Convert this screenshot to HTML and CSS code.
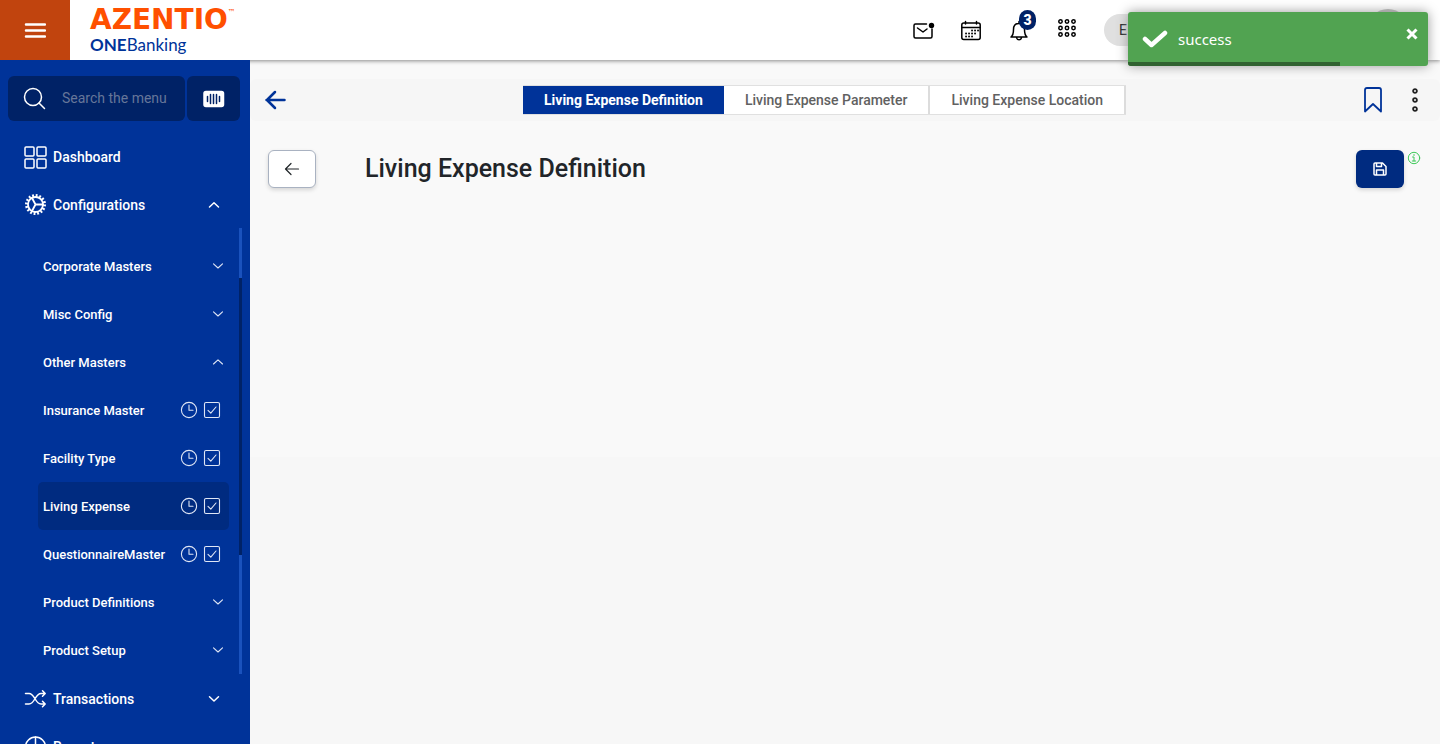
FILE: index.html
```html
<!DOCTYPE html>
<html lang="en">
<head>
<meta charset="utf-8">
<title>Living Expense Definition</title>
<link rel="stylesheet" href="styles.css">
</head>
<body>
<svg class="sprite" aria-hidden="true">
  <symbol id="down" viewBox="0 0 12 8"><path d="M1.500 1.800 6 6l4.500-4.200"/></symbol>
  <symbol id="up" viewBox="0 0 12 8"><path d="M1.500 6 6 1.800 10.500 6"/></symbol>
  <symbol id="clock" viewBox="0 0 18 18"><circle cx="9" cy="9" r="7.6"/><path d="M9 4v5.2h4"/></symbol>
  <symbol id="check" viewBox="0 0 18 18"><rect x="1.5" y="1.5" width="15" height="15" rx="1.5"/><path d="m5 9.3 2.8 2.8L13 6"/></symbol>
</svg>
<header class="topbar">
  <button class="burger" aria-label="Toggle menu"><svg width="22" height="16" viewBox="0 0 22 16"><path d="M2 2.500h19M2 8.500h19M2 14.500h19"/></svg></button>
  <div class="brand">
    <div class="brand-name">AZENTIO<span class="tm">™</span></div>
    <div class="brand-product"><b>ONE</b>Banking</div>
  </div>
  <div class="top-actions">
    <button class="icon-btn" aria-label="Messages"><svg width="24" height="24" viewBox="0 0 24 24"><path d="M15.500 6H4.500Q3 6 3 7.500v11Q3 20 4.500 20h15q1.500 0 1.500-1.500V11M6.500 10l5.500 4 4-3"/><circle class="solid" cx="20.500" cy="7.500" r="2.700"/></svg></button>
    <button class="icon-btn" aria-label="Calendar"><svg width="24" height="24" viewBox="0 0 24 24"><rect x="2.800" y="5" width="18.400" height="16.500" rx="2"/><path d="M3 9.500h18M6.500 3.500V6M17.500 3.500V6"/><path class="dots" d="M13 12.500h.1M16 12.500h.1M19 12.500h.1M7 15.500h.1M10 15.500h.1M13 15.500h.1M16 15.500h.1M7 18.500h.1M10 18.500h.1M13 18.500h.1"/></svg></button>
    <button class="icon-btn" aria-label="Notifications, 3 new"><svg width="24" height="24" viewBox="0 0 24 24"><path d="M4 19h16c-2-1.500-2.500-3.500-2.500-7.500 0-3.500-2-6-5.500-6s-5.500 2.500-5.500 6c0 4-.5 6-2.500 7.500ZM9.500 19.500c.5 3 4.500 3 5 0M12 5.500V3.500"/></svg><span class="badge">3</span></button>
    <button class="icon-btn apps" aria-label="Applications"><svg width="20" height="20" viewBox="0 0 20 20"><g class="rings"><circle cx="3.500" cy="3.500" r="1.700"/><circle cx="10" cy="3.500" r="1.700"/><circle cx="16.500" cy="3.500" r="1.700"/><circle cx="3.500" cy="10" r="1.700"/><circle cx="10" cy="10" r="1.700"/><circle cx="16.500" cy="10" r="1.700"/><circle cx="3.500" cy="16.500" r="1.700"/><circle cx="10" cy="16.500" r="1.700"/><circle cx="16.500" cy="16.500" r="1.700"/></g></svg></button>
    <button class="entity">E</button>
    <div class="avatar"></div>
  </div>
</header>
<div class="shell">
  <aside class="sidebar">
    <div class="search-row">
      <label class="search"><svg width="24" height="24" viewBox="0 0 24 24"><circle cx="10" cy="10" r="8.500"/><path d="m16 16 5.500 5.500"/></svg><input type="text" placeholder="Search the menu" aria-label="Search the menu"></label>
      <button class="scan" aria-label="Scan"><svg width="22" height="18" viewBox="0 0 22 18"><rect class="plate" x="1" y="1.500" width="19.500" height="15" rx="2"/><path d="M4.500 6.500v5M7.500 4.500v9M10.500 4.500v9M13.500 4.500v9M16.500 6.500v5"/></svg></button>
    </div>
    <nav class="menu">
      <a class="item" href="#"><svg width="24" height="24" viewBox="0 0 24 24"><rect x="2" y="2" width="9" height="9" rx="1"/><rect x="14" y="2" width="9" height="9" rx="1"/><rect x="2" y="14" width="9" height="9" rx="1"/><rect x="14" y="14" width="9" height="9" rx="1"/></svg><span>Dashboard</span></a>
      <a class="item" href="#"><svg width="24" height="24" viewBox="0 0 24 24"><circle class="teeth" cx="12.500" cy="11.500" r="9"/><circle class="gear" cx="12.500" cy="11.500" r="7.500"/><path class="gear" d="M12.500 11.500H20M12.500 11.500 9 5M12.500 11.500 9 18"/></svg><span>Configurations</span><svg class="chev" width="12" height="8"><use href="#up"/></svg></a>
      <div class="submenu">
        <div class="sublist">
          <a class="sub" href="#"><span>Corporate Masters</span><svg class="chev" width="12" height="8"><use href="#down"/></svg></a>
          <a class="sub" href="#"><span>Misc Config</span><svg class="chev" width="12" height="8"><use href="#down"/></svg></a>
          <a class="sub" href="#"><span>Other Masters</span><svg class="chev" width="12" height="8"><use href="#up"/></svg></a>
          <a class="sub leaf" href="#"><span>Insurance Master</span><svg width="18" height="18"><use href="#clock"/></svg><svg width="18" height="18"><use href="#check"/></svg></a>
          <a class="sub leaf" href="#"><span>Facility Type</span><svg width="18" height="18"><use href="#clock"/></svg><svg width="18" height="18"><use href="#check"/></svg></a>
          <a class="sub leaf current" href="#"><span>Living Expense</span><svg width="18" height="18"><use href="#clock"/></svg><svg width="18" height="18"><use href="#check"/></svg></a>
          <a class="sub leaf" href="#"><span>QuestionnaireMaster</span><svg width="18" height="18"><use href="#clock"/></svg><svg width="18" height="18"><use href="#check"/></svg></a>
          <a class="sub" href="#"><span>Product Definitions</span><svg class="chev" width="12" height="8"><use href="#down"/></svg></a>
          <a class="sub" href="#"><span>Product Setup</span><svg class="chev" width="12" height="8"><use href="#down"/></svg></a>
        </div>
        <div class="track"><div class="thumb"></div></div>
      </div>
      <a class="item" href="#"><svg width="24" height="24" viewBox="0 0 24 24"><path d="M2.500 6.500h3.500c6 0 6 10.500 12 10.500h4M2.500 17h3.500c6 0 6-10.500 12-10.500h4M19.500 3.800l2.700 2.700-2.700 2.700M19.500 14.300l2.700 2.700-2.700 2.700"/></svg><span>Transactions</span><svg class="chev" width="12" height="8"><use href="#down"/></svg></a>
      <a class="item" href="#"><svg width="24" height="24" viewBox="0 0 24 24"><circle cx="12.500" cy="12" r="10"/><path d="M12.500 2v10h10M12.500 12l-7 7"/></svg><span>Reports</span></a>
    </nav>
  </aside>
  <main class="content">
    <div class="toolbar">
      <button class="nav-back" aria-label="Back"><svg width="22" height="20" viewBox="0 0 22 20"><path d="M20.500 10H2.500M11 2 3 10l8 8"/></svg></button>
      <div class="tabs" role="tablist">
        <button class="tab active" role="tab" aria-selected="true">Living Expense Definition</button>
        <button class="tab" role="tab" aria-selected="false">Living Expense Parameter</button>
        <button class="tab" role="tab" aria-selected="false">Living Expense Location</button>
      </div>
      <div class="tools">
        <button aria-label="Bookmark"><svg class="mark" width="20" height="28" viewBox="0 0 20 28"><path d="M2 25.500V4q0-2 2-2h12q2 0 2 2v21.500l-8-7.500Z"/></svg></button>
        <button aria-label="More"><svg class="more" width="8" height="26" viewBox="0 0 8 26"><circle cx="4" cy="4" r="1.900"/><circle cx="4" cy="13" r="1.900"/><circle cx="4" cy="22" r="1.900"/></svg></button>
      </div>
    </div>
    <div class="page-head">
      <button class="return" aria-label="Return"><svg width="16" height="14" viewBox="0 0 16 14"><path d="M14.500 7H1.500M7 1.500 1.500 7 7 12.500"/></svg></button>
      <h1>Living Expense Definition</h1>
      <button class="save" aria-label="Save"><svg width="14" height="14" viewBox="0 0 14 14"><path d="M2 1h7.500L13 4.500V12q0 1-1 1H2q-1 0-1-1V2q0-1 1-1ZM3.500 1.500v3h5v-3M3.500 13V8h7v5"/></svg></button>
      <svg class="info" width="14" height="14" viewBox="0 0 14 14"><circle cx="7" cy="7" r="5.700"/><path d="M5.500 6H7v4M5.300 10h3.400M7 3.500v1"/></svg>
    </div>
  </main>
</div>
<div class="toast" role="status">
  <svg width="26" height="20" viewBox="0 0 26 20"><path class="tick" d="m3 10 6.500 6L23 4"/></svg>
  <span>success</span>
  <button aria-label="Close"><svg width="12" height="12" viewBox="0 0 12 12"><path d="m1.500 1.500 9 9M10.500 1.500l-9 9"/></svg></button>
  <div class="progress"></div>
</div>
</body>
</html>
```
FILE: styles.css
```css
* { box-sizing: border-box; }
body { margin: 0; height: 100vh; display: flex; flex-direction: column; overflow: hidden; font-family: Roboto, "Liberation Sans", sans-serif; color: #212529; }
button { padding: 0; border: 0; background: none; font: inherit; color: inherit; cursor: pointer; }
svg { display: block; flex: none; fill: none; stroke: currentColor; stroke-width: 1.5; stroke-linecap: round; stroke-linejoin: round; }
a { color: inherit; text-decoration: none; }
.sprite { position: absolute; width: 0; height: 0; }

.topbar { position: relative; z-index: 1; flex: none; display: flex; height: 60px; background: #fff; box-shadow: 0 1px 4px rgba(0, 0, 0, .45); }
.burger { width: 70px; display: flex; align-items: center; justify-content: center; background: #c1440e; color: #fff; }
.burger svg { stroke-width: 2.5; }
.brand { padding: 7px 0 0 20px; }
.brand-name { display: flex; align-items: flex-start; height: 28px; font: 700 28px/26px "DejaVu Sans", sans-serif; color: #ff5000; }
.tm { font-size: 8px; line-height: 12px; font-weight: 400; }
.brand-product { font: 400 17px/20px Lato, sans-serif; color: #003399; }
.top-actions { margin-left: auto; display: flex; align-items: center; gap: 24px; padding-right: 31px; }
.icon-btn { position: relative; width: 24px; height: 24px; color: #000; }
.apps { display: flex; justify-content: center; align-items: flex-start; }
.solid { fill: #000; stroke: none; }
.dots { stroke-width: 1.8; }
.rings { stroke-width: 1.5; }
.badge { position: absolute; top: -8px; right: -5px; width: 17px; height: 20px; border-radius: 10px; background: #002266; color: #fff; font-size: 14px; line-height: 20px; font-weight: 900; text-align: center; }
.entity { width: 240px; height: 32px; margin-left: 1px; padding-left: 15px; border-radius: 16px; background: #e0e0e0; font-size: 14px; text-align: left; }
.avatar { width: 42px; height: 42px; margin-left: -1px; border-radius: 50%; background: #b5b5b5; }

.shell { flex: 1; min-height: 0; display: flex; }
.sidebar { flex: none; width: 250px; background: #003399; color: #fff; overflow: hidden; position: relative; z-index: 2; }
.search-row { display: flex; gap: 2px; padding: 16px 10px 12px 8px; }
.search { flex: 1; display: flex; align-items: center; gap: 13px; height: 45px; padding-left: 15px; border-radius: 6px; background: #002266; }
.search input { min-width: 0; width: 100%; padding: 0 2px 2px; border: 0; outline: 0; background: none; color: #fff; font: 400 14px Roboto, sans-serif; }
.search input::placeholder { color: #667699; }
.scan { width: 53px; display: flex; align-items: center; justify-content: center; border-radius: 6px; background: #002266; color: #002266; }
.plate { fill: #fff; stroke: #fff; }
.item { display: flex; align-items: center; gap: 6px; height: 48px; padding: 0 30px 0 23px; font-size: 14px; font-weight: 500; }
.item .chev, .sub .chev { margin-left: auto; }
.teeth { stroke-width: 3; stroke-dasharray: 1.8 1.73; stroke-linecap: butt; }
.gear { stroke-width: 1.8; }
.submenu { display: flex; justify-content: space-between; margin-top: -1px; padding: 0 8px 1px 38px; }
.sublist { width: 191px; padding-top: 14px; }
.sub { display: flex; align-items: center; gap: 5px; height: 48px; padding: 0 5px; border-radius: 5px; font-size: 13px; font-weight: 500; }
.leaf { padding-right: 8px; }
.leaf span { margin-right: auto; }
.sub svg { stroke-width: 1.1; color: #dfe6f5; }
.current { background: #002b80; }
.track { width: 3px; padding-top: 50px; background: #1a52bd; }
.thumb { height: 70%; background: #002266; }

.content { flex: 1; min-width: 0; padding-top: 19px; background: linear-gradient(#f9f9f9 58%, #f7f7f7 58%); }
.toolbar { display: flex; align-items: center; justify-content: space-between; height: 42px; padding: 0 21px 0 14px; border-radius: 6px; background: #f6f6f6; }
.nav-back { color: #003399; }
.nav-back svg { stroke-width: 2.5; }
.tabs { display: flex; height: 30px; border: 1px solid #e0e0e0; border-width: 1px 0; background: #fff; }
.tab { padding: 0 21px; border-right: 2px solid #dcdcdc; color: #616161; font-size: 14px; font-weight: 500; }
.active { background: #003399; border: 0; color: #fff; font-weight: 700; }
.tools { display: flex; align-items: center; gap: 28px; }
.mark { color: #003399; stroke-width: 1.8; }
.more { color: #212121; stroke-width: 1.8; }
.page-head { display: flex; align-items: flex-start; padding: 29px 19px 0 18px; }
.return, .save { display: flex; align-items: center; justify-content: center; width: 48px; height: 38px; border-radius: 6px; box-shadow: 0 2px 4px rgba(0, 0, 0, .15); }
.return { background: #fff; border: 1px solid #a9b2c1; }
.return svg { stroke-width: 1.2; }
h1 { margin: 0 auto 0 49px; font-size: 25px; line-height: 38px; font-weight: 500; }
.save { background: #002b80; color: #fff; }
.info { margin: 1px 0 0 3px; color: #3fc95a; stroke-width: 1; }

.toast { position: absolute; z-index: 5; top: 12px; right: 12px; display: flex; align-items: center; width: 300px; height: 54px; padding: 0 10px 0 14px; border-radius: 3px; overflow: hidden; background: #51a351; box-shadow: 0 0 12px #999; color: #fff; font: 400 15px "Noto Sans", sans-serif; }
.toast span { margin-left: 10px; }
.toast button { margin: 0 0 10px auto; }
.toast button svg { stroke-width: 3; stroke-linecap: butt; }
.toast .tick { stroke-width: 4.5; }
.progress { position: absolute; left: 0; bottom: 0; width: 212px; height: 4px; background: #316231; }
```
